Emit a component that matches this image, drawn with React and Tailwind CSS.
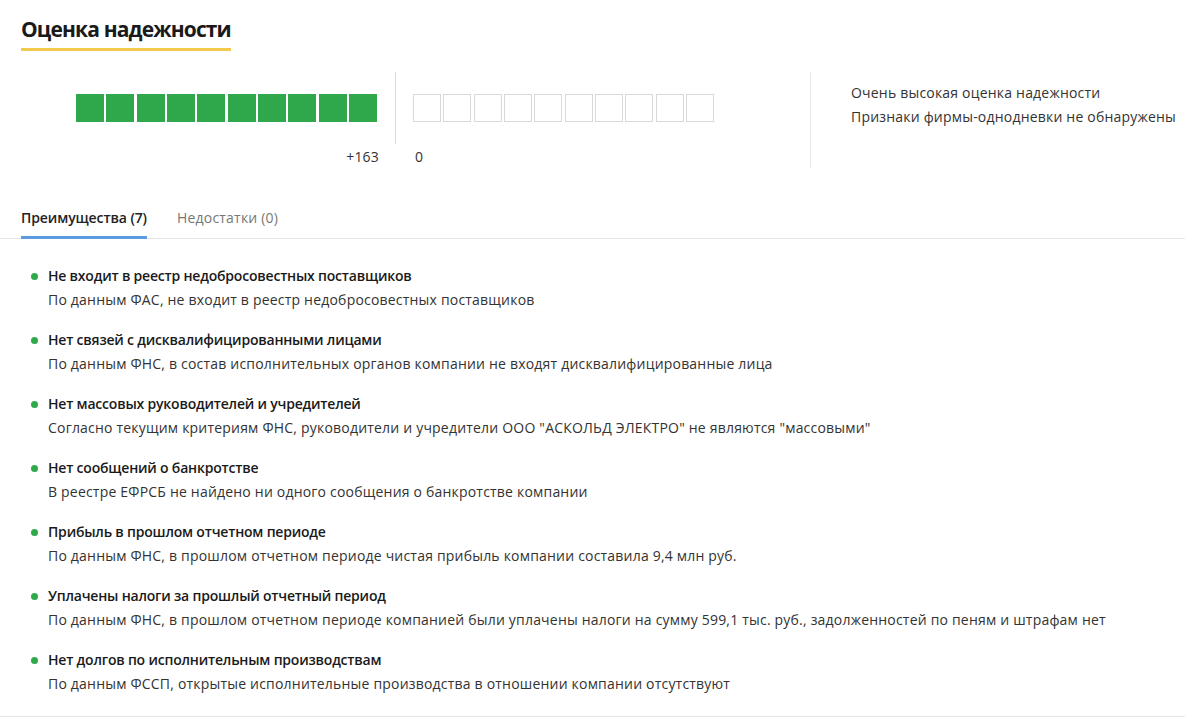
import React from 'react';

const items = [
  {
    title: 'Не входит в реестр недобросовестных поставщиков',
    text: 'По данным ФАС, не входит в реестр недобросовестных поставщиков',
  },
  {
    title: 'Нет связей с дисквалифицированными лицами',
    text: 'По данным ФНС, в состав исполнительных органов компании не входят дисквалифицированные лица',
  },
  {
    title: 'Нет массовых руководителей и учредителей',
    text: 'Согласно текущим критериям ФНС, руководители и учредители ООО "АСКОЛЬД ЭЛЕКТРО" не являются "массовыми"',
  },
  {
    title: 'Нет сообщений о банкротстве',
    text: 'В реестре ЕФРСБ не найдено ни одного сообщения о банкротстве компании',
  },
  {
    title: 'Прибыль в прошлом отчетном периоде',
    text: 'По данным ФНС, в прошлом отчетном периоде чистая прибыль компании составила 9,4 млн руб.',
  },
  {
    title: 'Уплачены налоги за прошлый отчетный период',
    text: 'По данным ФНС, в прошлом отчетном периоде компанией были уплачены налоги на сумму 599,1 тыс. руб., задолженностей по пеням и штрафам нет',
  },
  {
    title: 'Нет долгов по исполнительным производствам',
    text: 'По данным ФССП, открытые исполнительные производства в отношении компании отсутствуют',
  },
];

const boxes = Array.from({ length: 10 });

export default function App() {
  return (
    <div className="w-[1185px] h-[717px] overflow-hidden bg-white text-[#333] font-['Open_Sans',sans-serif] tracking-[0.2px] border-b border-[#e6e6e6]">
      {/* Header */}
      <div className="pl-[21px] pt-[14px]">
        <h2 className="inline-block text-[21px] font-bold text-[#1a1a1a] leading-[30px] pb-[4px] border-b-[3px] border-[#f2c94c] tracking-[-0.85px]">
          Оценка надежности
        </h2>
      </div>

      {/* Score */}
      <div className="flex pt-[21px] h-[157px]">
        <div className="w-[396px] shrink-0 flex flex-col items-end pr-[18px] pt-[22px] border-r border-[#ddd] h-[72px]">
          <div className="flex gap-[2.33px]">
            {boxes.map((_, i) => (
              <div key={i} className="w-[28px] h-[28px] bg-[#2ea84b]" />
            ))}
          </div>
          <div className="text-sm mt-[25px] mr-[-2px] leading-[20px]">+163</div>
        </div>
        <div className="w-[415px] shrink-0 pl-[17px] pt-[22px] border-r border-[#e6e6e6] h-[96px]">
          <div className="flex gap-[2.33px]">
            {boxes.map((_, i) => (
              <div key={i} className="w-[28px] h-[28px] border border-[#d9d9d9]" />
            ))}
          </div>
          <div className="text-sm mt-[25px] pl-[2px] leading-[20px]">0</div>
        </div>
        <div className="pl-[40px] pt-[9px] text-sm leading-[24px] whitespace-nowrap">
          <div>Очень высокая оценка надежности</div>
          <div>Признаки фирмы-однодневки не обнаружены</div>
        </div>
      </div>

      {/* Tabs */}
      <div className="flex gap-[30px] pl-[21px] border-b border-[#e6e6e6] text-sm">
        <div className="font-semibold tracking-[-0.1px] text-[#222] pb-[8px] border-b-[3px] border-[#5b9bdf] mb-[-1px]">
          Преимущества (7)
        </div>
        <div className="text-[#777] pb-[8px]">Недостатки (0)</div>
      </div>

      {/* List */}
      <div className="pt-[26px] pl-[31px] flex flex-col gap-[18px]">
        {items.map((it, i) => (
          <div key={i} className="flex">
            <div className="w-[17px] pt-[8px]">
              <div className="w-[7px] h-[7px] rounded-full bg-[#2ea84b]" />
            </div>
            <div className="text-sm leading-[22px]">
              <div className="font-semibold tracking-[-0.2px] text-[#1a1a1a]">{it.title}</div>
              <div className="mt-[2px]">{it.text}</div>
            </div>
          </div>
        ))}
      </div>
    </div>
  );
}
